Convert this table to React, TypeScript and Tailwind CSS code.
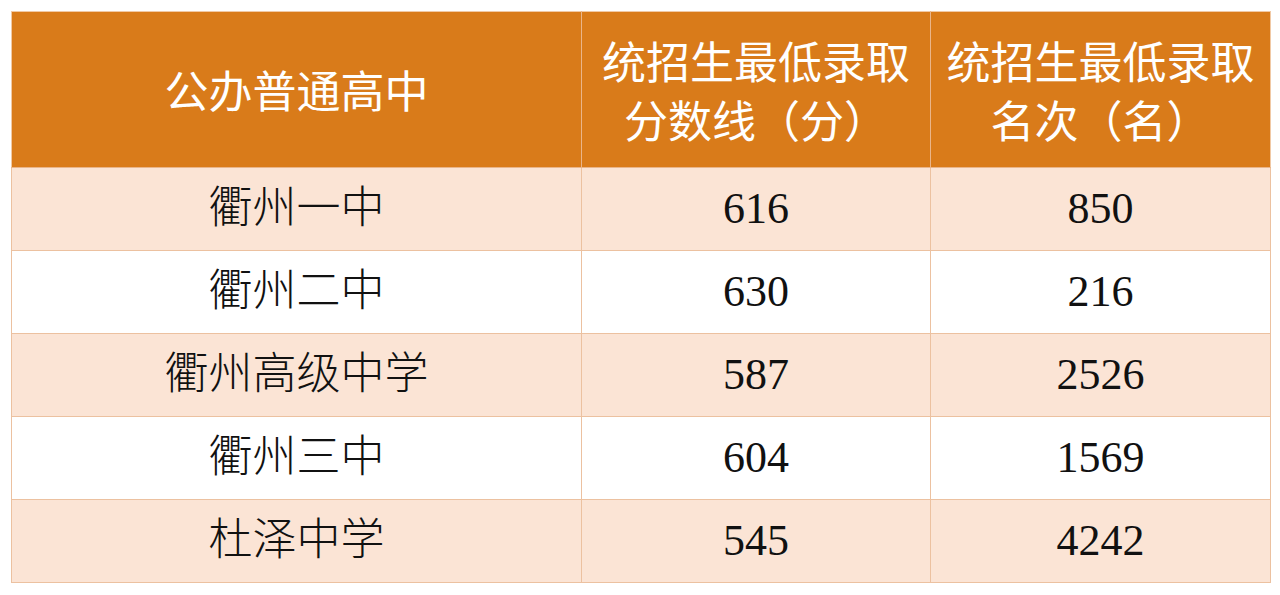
const rows = [
  { name: "衢州一中", score: "616", rank: "850" },
  { name: "衢州二中", score: "630", rank: "216" },
  { name: "衢州高级中学", score: "587", rank: "2526" },
  { name: "衢州三中", score: "604", rank: "1569" },
  { name: "杜泽中学", score: "545", rank: "4242" },
];

export default function App() {
  return (
    <div className="w-[1280px] h-[595px] bg-white pt-[11px] pl-[11px]">
      <table className="border-collapse table-fixed w-[1259px]">
        <colgroup>
          <col className="w-[570px]" />
          <col className="w-[349px]" />
          <col className="w-[340px]" />
        </colgroup>
        <thead>
          <tr className="h-[156px] bg-[#d97b1a] text-white font-['Noto_Sans_CJK_SC',sans-serif] text-[44px] leading-[59px]">
            <th className="font-normal border border-[#eab58a] border-t-[#f1c9a5] border-l-[#f1c9a5]">公办普通高中</th>
            <th className="font-normal border border-[#eab58a] border-t-[#f1c9a5]">
              统招生最低录取
              <br />
              分数线（分）
            </th>
            <th className="font-normal border border-[#eab58a] border-t-[#f1c9a5] border-r-[#f1c9a5]">
              统招生最低录取
              <br />
              名次（名）
            </th>
          </tr>
        </thead>
        <tbody className="font-['Liberation_Serif','Noto_Sans_CJK_SC',serif] text-[44px] text-[#111]">
          {rows.map((r, i) => (
            <tr key={r.name} className={`h-[83px] ${i % 2 === 0 ? "bg-[#fbe4d5]" : "bg-white"}`}>
              <td className="text-center border border-[#ecc1a0] font-light">{r.name}</td>
              <td className="text-center border border-[#ecc1a0]">{r.score}</td>
              <td className="text-center border border-[#ecc1a0]">{r.rank}</td>
            </tr>
          ))}
        </tbody>
      </table>
    </div>
  );
}
